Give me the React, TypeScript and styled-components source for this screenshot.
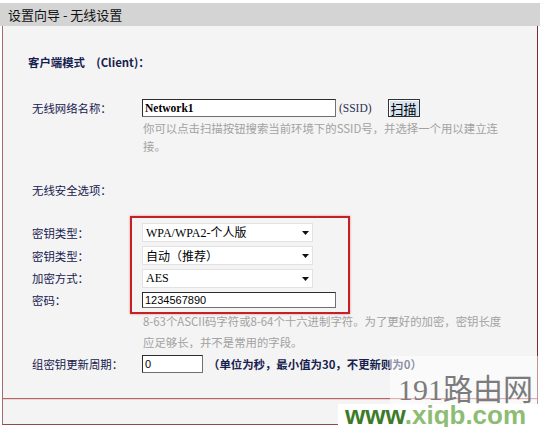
import React from "react";
import styled, { createGlobalStyle } from "styled-components";

const GlobalStyle = createGlobalStyle`
  html, body {
    margin: 0;
    padding: 0;
    background: #fff;
  }
  body {
    font-family: "Noto Sans CJK SC", sans-serif;
    font-size: 11.4px;
  }
`;

const Page = styled.div`
  position: relative;
  width: 540px;
  height: 427px;
  padding-top: 3px;
  box-sizing: border-box;
  overflow: hidden;
  background: #fff;
`;

const Header = styled.div`
  height: 23px;
  line-height: 23px;
  padding-left: 8px;
  background: #d4d4d4;
  color: #111;
  font-size: 13px;
`;

const Panel = styled.div`
  margin-left: 2px;
  width: 536px;
  box-sizing: border-box;
  background: #f4f4f4;
  border-left: 1px solid #a46c6c;
  border-right: 1px solid #7c2c2c;
  border-bottom: 1px solid #8c4c4c;
`;

const Form = styled.div`
  padding: 26px 0 0 29px;
`;

const SectionTitle = styled.div<{ $mt?: number; $shift?: number; $bold?: boolean }>`
  margin-top: ${(p) => p.$mt ?? 0}px;
  margin-left: ${(p) => p.$shift ?? 0}px;
  height: 20px;
  line-height: 20px;
  color: #16204e;
  font-weight: ${(p) => (p.$bold ? 700 : 400)};
  white-space: pre;
`;

const Row = styled.div<{ $h: number; $mt?: number }>`
  display: flex;
  align-items: center;
  height: ${(p) => p.$h}px;
  margin-top: ${(p) => p.$mt ?? 0}px;
`;

const Label = styled.span`
  flex: none;
  width: 110px;
  color: #16204e;
`;

const TextInput = styled.input<{ $w: number; $h: number; $serif?: boolean }>`
  box-sizing: border-box;
  width: ${(p) => p.$w}px;
  height: ${(p) => p.$h}px;
  margin: 0;
  padding: 0 2px;
  border: 1px solid #707070;
  border-top-color: #2c2c2c;
  border-left-color: #2c2c2c;
  background: #fff;
  color: #000;
  outline: none;
  font-family: ${(p) =>
    p.$serif ? `"Liberation Serif", serif` : `"Liberation Sans", sans-serif`};
  font-weight: ${(p) => (p.$serif ? 700 : 400)};
  font-size: ${(p) => (p.$serif ? 11.5 : 11)}px;
`;

const Suffix = styled.span`
  margin-left: 3px;
  font-family: "Liberation Serif", serif;
  font-size: 11.5px;
  color: #2a3050;
`;

const ScanButton = styled.button`
  box-sizing: border-box;
  margin-left: 16px;
  width: 32px;
  height: 18px;
  padding: 0;
  border: 1px solid #333;
  background: #d6e3f1;
  box-shadow: inset 1px 1px 0 #fff;
  font-family: "Noto Sans CJK SC", sans-serif;
  font-size: 13px;
  line-height: 15px;
  color: #000;
`;

const Hint = styled.div<{ $lh: number; $mt?: number }>`
  margin-top: ${(p) => p.$mt ?? 0}px;
  margin-left: 111px;
  line-height: ${(p) => p.$lh}px;
  color: #a2a2a2;
  white-space: nowrap;
`;

const SelectWrap = styled.div`
  position: relative;
  width: 171px;
  height: 19px;
`;

const Select = styled.select<{ $latin?: boolean }>`
  appearance: none;
  box-sizing: border-box;
  width: 100%;
  height: 100%;
  margin: 0;
  padding: 0 0 0 3px;
  border: 1px solid #e2e2e2;
  border-radius: 0;
  background: #fff;
  color: #000;
  outline: none;
  font-family: ${(p) =>
    p.$latin
      ? `"Liberation Serif", "Noto Sans CJK SC", serif`
      : `"Noto Sans CJK SC", sans-serif`};
  font-size: 12px;
`;

const Caret = styled.svg`
  position: absolute;
  right: 4px;
  top: 8px;
  pointer-events: none;
`;

const UnitNote = styled.span`
  margin-left: 5px;
  color: #16204e;
  font-weight: 700;
`;

const Footer = styled.div`
  margin-top: 24px;
  height: 25px;
  border-top: 1px solid #b46464;
  box-shadow: inset 0 1px 0 #eed6d6;
`;

/* red frame drawn around the security fields */
const Highlight = styled.div`
  position: absolute;
  left: 130px;
  top: 216px;
  width: 220px;
  height: 98px;
  box-sizing: border-box;
  border: 2px solid #c42126;
  box-shadow: 0 0 2px rgba(220, 60, 60, 0.6);
  pointer-events: none;
`;

const StampFade = styled.div`
  position: absolute;
  left: 390px;
  top: 356px;
  width: 150px;
  height: 48px;
  background: rgba(255, 255, 255, 0.5);
`;

const StampName = styled.div`
  position: absolute;
  left: 398px;
  top: 377px;
  font-family: "Liberation Serif", "Noto Sans CJK SC", serif;
  font-size: 30px;
  line-height: 26px;
  color: #7c7c7c;
  white-space: nowrap;
`;

const StampSite = styled.div`
  position: absolute;
  left: 338px;
  top: 404px;
  width: 202px;
  height: 23px;
  padding-left: 7px;
  box-sizing: border-box;
  overflow: hidden;
  background: #fff;
  font-family: "Liberation Sans", sans-serif;
  font-weight: 700;
  font-size: 26px;
  line-height: 22px;
  color: #8dbd74;
  white-space: nowrap;
`;

const SiteStrong = styled.span`
  color: #3d7b2a;
`;

const DropDown = ({ value, latin }: { value: string; latin?: boolean }) => (
  <SelectWrap>
    <Select $latin={latin} defaultValue={value}>
      <option value={value}>{value}</option>
    </Select>
    <Caret width="7" height="4" viewBox="0 0 7 4">
      <path d="M0 0H7L3.5 4Z" fill="#111" />
    </Caret>
  </SelectWrap>
);

const App = () => {
  return (
    <Page>
      <GlobalStyle />
      <Header>设置向导 - 无线设置</Header>
      <Panel>
        <Form>
          <SectionTitle $shift={-4} $bold>
            {"客户端模式　(Client)："}
          </SectionTitle>

          <Row $h={20} $mt={26}>
            <Label>无线网络名称：</Label>
            <TextInput $w={194} $h={18} $serif defaultValue="Network1" />
            <Suffix>(SSID)</Suffix>
            <ScanButton>扫描</ScanButton>
          </Row>
          <Hint $lh={18} $mt={1}>
            你可以点击扫描按钮搜索当前环境下的SSID号，并选择一个用以建立连
            <br />
            接。
          </Hint>

          <SectionTitle $mt={25}>无线安全选项：</SectionTitle>

          <Row $h={23} $mt={21}>
            <Label>密钥类型：</Label>
            <DropDown value="WPA/WPA2-个人版" latin />
          </Row>
          <Row $h={23}>
            <Label>密钥类型：</Label>
            <DropDown value="自动（推荐）" />
          </Row>
          <Row $h={22}>
            <Label>加密方式：</Label>
            <DropDown value="AES" latin />
          </Row>
          <Row $h={22}>
            <Label>密码：</Label>
            <TextInput $w={194} $h={16} defaultValue="1234567890" />
          </Row>
          <Hint $lh={21}>
            8-63个ASCII码字符或8-64个十六进制字符。为了更好的加密，密钥长度
            <br />
            应足够长，并不是常用的字段。
          </Hint>

          <Row $h={21}>
            <Label>组密钥更新周期：</Label>
            <TextInput $w={61} $h={18} defaultValue="0" />
            <UnitNote>（单位为秒，最小值为30，不更新则为0）</UnitNote>
          </Row>
        </Form>
        <Footer />
      </Panel>

      <Highlight />

      <StampFade />
      <StampName>191路由网</StampName>
      <StampSite>
        <SiteStrong>www</SiteStrong>.xiqb.com
      </StampSite>
    </Page>
  );
};

export default App;
